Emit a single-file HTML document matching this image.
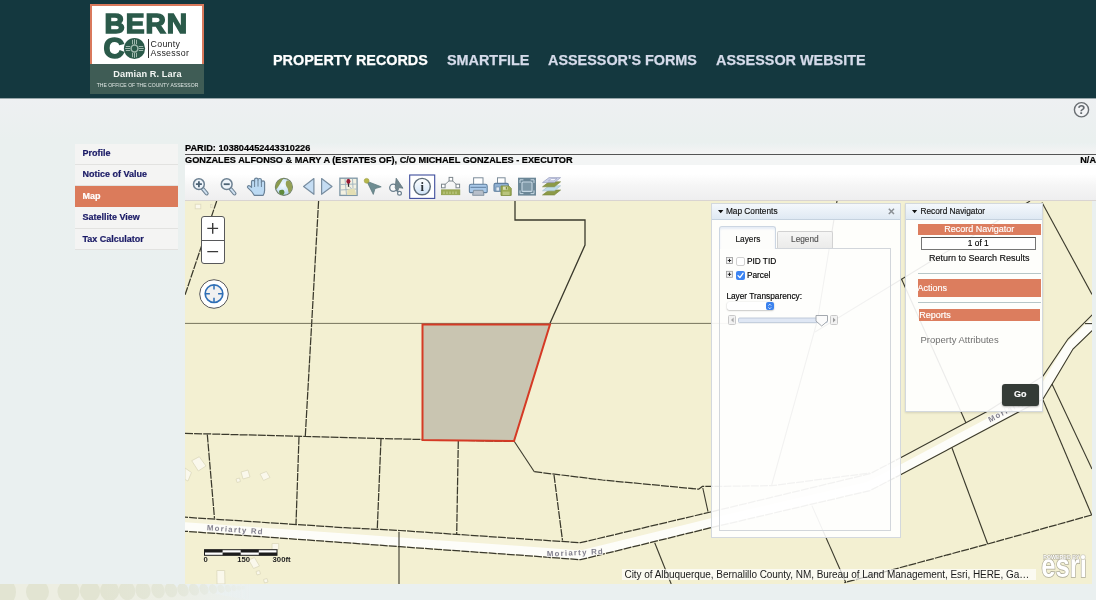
<!DOCTYPE html>
<html lang="en">
<head>
<meta charset="utf-8">
<title>Bernalillo County Assessor - Map</title>
<style>
*{box-sizing:border-box;margin:0;padding:0}
html,body{width:1096px;height:600px;overflow:hidden}
body{position:relative;background:linear-gradient(#eef0f2 98px,#eaf0ef 140px,#eaf0f0 400px);font-family:"Liberation Sans",sans-serif;color:#000}
.abs{position:absolute}
#header{position:absolute;left:0;top:0;width:1096px;height:98px;background:#14383f}
#logo{position:absolute;left:90px;top:4px;width:115px;height:90px}
#nav a{position:absolute;top:50.7px;-webkit-text-stroke:.25px;font-size:14.4px;line-height:18px;font-weight:bold;color:#d5dbea;white-space:nowrap;text-decoration:none;letter-spacing:0}
#nav a.cur{color:#fff}
#side{position:absolute;left:75px;top:144px;width:103px;background:#f4f4f3}
#side div{height:21px;padding:0 0 0 7.5px;font-size:9px;line-height:20px;-webkit-text-stroke:.2px;font-weight:bold;color:#1a1a66;border-bottom:1px solid #e2e2e0;margin:0}
#side div:nth-child(1){line-height:18px}#side div:nth-child(2){line-height:19.2px}#side div:nth-child(3){line-height:20.6px}#side div:nth-child(4){height:22px}
#side div.sel{background:#db7b5b;color:#fff;border-bottom-color:#db7b5b}
#titles{-webkit-text-stroke:.2px;position:absolute;left:185px;top:143px;width:911px;background:linear-gradient(#eaf0f0,#f2f3f3 8px,#f4f5f5 11px,#f3f5f5);font-size:9.18px;font-weight:bold;line-height:11px}
#toolbar{position:absolute;left:185px;top:165px;width:911px;height:36px;background:linear-gradient(#fff,#fff 9px,#f6f6f6 20px,#eeeeef 35px);border-bottom:1px solid #d9d4d2}
#map{position:absolute;left:185px;top:201px;width:907px;height:383px;background:#f3f0d2;overflow:hidden}
.panel{-webkit-text-stroke:.15px;position:absolute;background:rgba(255,255,255,.9);border:1px solid #d3d8dd;font-size:8.3px}
.ptitle{position:absolute;left:0;top:0;right:0;height:16px;background:linear-gradient(#f4f8fc,#dfe9f3);border-bottom:1px solid #c5d2df;font-size:8.3px;line-height:15px;padding-left:14.5px;color:#111}
.obar{position:absolute;background:#dc7d5e;color:#fff;font-size:10px}
</style>
</head>
<body>
<div id="root" style="position:absolute;left:0;top:0;width:1096px;height:600px;will-change:transform">
<div id="header">
  <div id="logo">
    <div class="abs" style="left:0;top:-.4px;width:114.4px;height:61.4px;background:#fff;border:2px solid #d9795c;border-bottom:none"></div>
    <div class="abs" style="left:0;top:60px;width:114.4px;height:30px;background:#3f5c55"></div>
    <div class="abs" style="left:14.5px;top:5.3px;font-size:28.2px;line-height:28px;font-weight:bold;color:#2b5a4a;letter-spacing:.9px;-webkit-text-stroke:1.5px #2b5a4a">BERN</div>
    <div class="abs" style="left:13.5px;top:30px;font-size:29px;line-height:28px;font-weight:bold;color:#2b5a4a;-webkit-text-stroke:1.5px #2b5a4a">C</div>
    <svg class="abs" style="left:33px;top:33px" width="23" height="23" viewBox="0 0 23 23"><circle cx="11.5" cy="11.5" r="10.6" fill="#2b5a4a"/><g stroke="#9fb8ad" stroke-width="1" fill="none"><path d="M9.5 2.8v4.4M11.5 2.2v5M13.500 2.800v4.400M9.5 15.800v4.400M11.5 15.800v5M13.500 15.800v4.400M2.800 9.500h4.400M2.200 11.500h5M2.800 13.500h4.400M15.800 9.500h4.400M15.800 11.500h5M15.800 13.500h4.400"/><circle cx="11.500" cy="11.500" r="3.400" stroke-width="1.500"/></g></svg>
    <div class="abs" style="left:57.5px;top:34.5px;width:1px;height:19.5px;background:#333"></div>
    <div class="abs" style="left:60.5px;top:35.5px;font-size:8.8px;line-height:9.7px;color:#222;letter-spacing:.32px">County<br>Assessor</div>
    <div class="abs" style="left:0;top:65px;width:115px;text-align:center;font-size:9.2px;line-height:11px;font-weight:bold;color:#f2f5f3;letter-spacing:.1px">Damian R. Lara</div>
    <div class="abs" style="left:-20.5px;top:77.5px;width:155px;text-align:center;font-size:5.9px;line-height:7px;color:#dfe6e3;white-space:nowrap;transform:scaleX(.86)">THE OFFICE OF THE COUNTY ASSESSOR</div>
  </div>
  <div id="nav">
    <a class="cur" style="left:273px">PROPERTY RECORDS</a>
    <a style="left:447px">SMARTFILE</a>
    <a style="left:548px">ASSESSOR'S FORMS</a>
    <a style="left:716px">ASSESSOR WEBSITE</a>
  </div>
</div>

<div class="abs" style="left:0;top:98px;width:1096px;height:1px;background:rgba(20,56,63,.4)"></div>
<div id="side">
  <div>Profile</div>
  <div>Notice of Value</div>
  <div class="sel">Map</div>
  <div>Satellite View</div>
  <div>Tax Calculator</div>
</div>

<div id="titles">
  <div style="height:11px">PARID: 103804452443310226</div>
  <div style="border-top:1px solid #555;height:11px;position:relative"><b id="own">GONZALES ALFONSO &amp; MARY A (ESTATES OF), C/O MICHAEL GONZALES - EXECUTOR</b><span style="position:absolute;right:0;top:0">N/A</span></div>
</div>

<div id="toolbar"><svg class="abs" style="left:0;top:0" width="911" height="36" viewBox="185 165 911 36">
<defs>
<linearGradient id="gl" x1="0" y1="0" x2="0" y2="1"><stop offset="0" stop-color="#ffffff"/><stop offset="1" stop-color="#cfe3f6"/></linearGradient>
<radialGradient id="gg" cx=".45" cy=".4" r=".65"><stop offset="0" stop-color="#f4f9fd"/><stop offset=".6" stop-color="#cfe6f7"/><stop offset="1" stop-color="#a9cbe8"/></radialGradient>
</defs>
<!-- zoom in -->
<g transform="translate(198.900 184.200)"><path d="M4 4.800L7.800 9.300" stroke="#6d8192" stroke-width="4" stroke-linecap="round"/><path d="M4.200 5L7.700 9.200" stroke="#cfe0f0" stroke-width="1.900" stroke-linecap="round"/><circle cx="0" cy="0" r="5.400" fill="#eef4fa" stroke="#6d8192" stroke-width="1.500"/><path d="M-3 0h6M0 -3v6" stroke="#4d6375" stroke-width="1.800"/></g>
<!-- zoom out -->
<g transform="translate(226.700 184.200)"><path d="M4 4.800L7.800 9.300" stroke="#6d8192" stroke-width="4" stroke-linecap="round"/><path d="M4.200 5L7.700 9.200" stroke="#cfe0f0" stroke-width="1.900" stroke-linecap="round"/><circle cx="0" cy="0" r="5.400" fill="#eef4fa" stroke="#6d8192" stroke-width="1.500"/><path d="M-3 0h6" stroke="#4d6375" stroke-width="1.800"/></g>
<!-- hand -->
<path d="M254.200 195.300c-1.200-2.600-3.600-5.200-6.300-7.400-1.200-1.300.3-3 1.900-2l1.700 1.500v-5.600c0-2 3.100-2 3.100 0v-2.200c0-2.100 3.400-2.100 3.400 0v.4c0-2 3.400-2 3.400 0v2.200c0-1.900 3.200-1.900 3.200 0v8c0 2-.5 3.600-1.400 5.100z" fill="#bcdaf3" stroke="#6a8196" stroke-width="1.200" stroke-linejoin="round"/>
<path d="M254.600 181.800v5.200M258 180v6.600M261.400 182v5" stroke="#6a8196" stroke-width="1" fill="none"/>
<!-- globe -->
<clipPath id="gclip"><circle cx="283.900" cy="186.900" r="8.300"/></clipPath>
<circle cx="283.900" cy="186.900" r="8.500" fill="url(#gg)" stroke="#71806a" stroke-width="1.200"/>
<g clip-path="url(#gclip)">
<path d="M274 184c.5-3 3-5.500 6-6.500 1.500-.3 3.500-.2 4.300.5-.5 1-1.800 1.300-2.300 2.500-.3 1.200-1.200 2-1.700 3-.6 1.200-1.500 2.300-2.200 3.400-.7 1-1.400 2.300-2.600 2.200-1-.7-1.700-3-1.500-5.100z" fill="#8a9a4e"/>
<path d="M279.600 190.300c1.200-.8 2.800-.9 3.900-.2 1 .9 1.200 2.200.6 3.400-.6 1.100-1.300 2.300-2.400 2.800-1.200-.6-1.800-1.800-2.300-3-.4-1-.6-2.200.2-3z" fill="#5f8a3c"/>
<path d="M287 180.500c1.500-.3 3.200.5 4.300 1.700 1.500 1.700 2.200 4 2 6.200-.3 2-1.200 4-2.800 5.200-1 .4-1.700-.5-2-1.400-.5-1.500-.3-3.200-1.200-4.500-.8-1.300-1.700-2.700-1.500-4.200.1-1.200.4-2.400 1.200-3z" fill="#93a055"/>
</g>
<!-- nav arrows -->
<path d="M303.600 186.400L313.900 178.600V194.300z" fill="#c5ddf3" stroke="#788da0" stroke-width="1.200" stroke-linejoin="round"/>
<path d="M332 186.400L321.600 178.600V194.300z" fill="#c5ddf3" stroke="#788da0" stroke-width="1.200" stroke-linejoin="round"/>
<!-- map pin -->
<rect x="339.900" y="178.200" width="17.200" height="17.200" fill="#f3f1e2" stroke="#7d96a6" stroke-width="1.300"/>
<path d="M340.500 190l16 -1M345 178.800l1.500 16M340.500 184.500l16-.5M352.500 178.800l.5 9.500M349.500 186.500l6.800 8.500" stroke="#9fb3be" stroke-width=".9" fill="none"/>
<path d="M347.500 189.500l7 -1 2 6.500h-9.500z" fill="#e4dfb4"/>
<path d="M348.500 186.800v-4" stroke="#333" stroke-width="1.200"/>
<ellipse cx="348.400" cy="181.300" rx="2" ry="2.500" fill="#981a33"/>
<!-- select arrow -->
<path d="M366.800 181.200L381.200 186.800 375 188.600 373.300 194.400z" fill="#6f8d92" stroke="#5f7c82" stroke-width=".8" stroke-linejoin="round"/>
<circle cx="366.600" cy="180.800" r="2.400" fill="#b6b84a" stroke="#9a9c3c" stroke-width=".6"/>
<!-- pointer with circle -->
<circle cx="393.300" cy="187.700" r="3.600" fill="#fff" fill-opacity=".6" stroke="#6b7f8d" stroke-width="1.300"/>
<path d="M396.200 178.200L403 188.200 399 187.600 397.400 191.800 395.200 187.800z" fill="#72888f" stroke="#5f747c" stroke-width=".8" stroke-linejoin="round"/>
<circle cx="399.500" cy="193.300" r="1.900" fill="#fff" stroke="#6b7f8d" stroke-width="1.200"/>
<path d="M396 189.800l2.300 2.300" stroke="#6b7f8d" stroke-width="1.200"/>
<!-- info -->
<rect x="409.700" y="175" width="25" height="23.400" fill="#fff" stroke="#3d4c9c" stroke-width="1.100"/>
<circle cx="422.100" cy="186.600" r="8.200" fill="url(#gl)" stroke="#5c6b78" stroke-width="1.400"/>
<text x="422.200" y="191.400" font-family="'Liberation Serif',serif" font-weight="bold" font-size="12.500" fill="#2a3036" text-anchor="middle">i</text>
<!-- measure -->
<path d="M443.400 186l7.500-6.800 7 6.800" fill="none" stroke="#8a9297" stroke-width="1"/>
<g fill="#fff" stroke="#7d868c" stroke-width="1"><rect x="449.100" y="177.400" width="3.600" height="3.600"/><rect x="441.500" y="184.200" width="3.600" height="3.600"/><rect x="456" y="184.200" width="3.600" height="3.600"/></g>
<rect x="441.300" y="189.800" width="18.600" height="5" fill="#9cab52" stroke="#8b9a45" stroke-width=".6"/>
<path d="M444 191.500v2.500M447 191.500v2.500M450 191.500v2.500M453 191.500v2.500M456 191.500v2.500" stroke="#cdd69a" stroke-width=".9"/>
<!-- printer -->
<g>
<rect x="473.600" y="177.800" width="9.400" height="7" fill="#fff" stroke="#7c8c9a" stroke-width="1"/>
<path d="M471.200 184.200h14.200c1 0 1.800.8 1.800 1.800v5.600c0 .6-.5 1-1 1h-15.800c-.6 0-1-.4-1-1v-5.600c0-1 .8-1.800 1.800-1.800z" fill="#a9c9e9" stroke="#5f7f9f" stroke-width="1.100"/>
<path d="M470.500 187.300h15.600" stroke="#5f7f9f" stroke-width="1"/>
<path d="M472.600 195.300l1-5h9.400l1 5z" fill="#b7bfca" stroke="#7c8c9a" stroke-width=".9"/>
</g>
<!-- printer + save -->
<g>
<rect x="497.500" y="177.800" width="7.600" height="6" fill="#fff" stroke="#7c8c9a" stroke-width="1"/>
<path d="M495.600 183.400h11.200c.9 0 1.600.7 1.600 1.600v5.400c0 .5-.4.900-.9.900h-12.600c-.5 0-.9-.4-.9-.9v-5.400c0-.9.700-1.600 1.600-1.600z" fill="#8fb0d2" stroke="#5f7f9f" stroke-width="1.100"/>
<rect x="496" y="187" width="3.500" height="4" fill="#dfe8f2" stroke="#5f7f9f" stroke-width=".6"/>
<path d="M501 186h7.800l2.400 2.400v7h-10.200z" fill="#9cab52" stroke="#7f8d3f" stroke-width=".9"/>
<rect x="503" y="186.600" width="4.600" height="3.200" fill="#d7ddb5"/><rect x="505.800" y="187" width="1.200" height="2.400" fill="#7f8d3f"/>
<rect x="502.600" y="191.600" width="7" height="3.400" fill="#b9c47c"/>
</g>
<!-- extent -->
<rect x="518" y="177.700" width="18" height="17.900" fill="#6c8797"/>
<rect x="522" y="182" width="10" height="9.400" rx="1" fill="#7f99a8" stroke="#c6d8e3" stroke-width="1.100"/>
<path d="M520 183v-3.200h3.400M530.600 179.800h3.400v3.200M534 190.400v3.200h-3.400M523.400 193.600h-3.400v-3.200" fill="none" stroke="#c6d8e3" stroke-width="1"/>
<!-- layers -->
<g stroke-width=".6">
<path d="M542.500 193l6.500-5h11.600l-6.200 5z" transform="translate(0 2)" fill="#8c9a47" stroke="#76833a"/>
<path d="M542.500 193l6.500-5h11.600l-6.200 5z" transform="translate(0 -2.200)" fill="#bfdcea" stroke="#9dbccb"/>
<path d="M542.500 193l6.500-5h11.600l-6.200 5z" transform="translate(0 -6.200)" fill="#8c9a47" stroke="#76833a"/>
<path d="M542.500 193l6.500-5h11.600l-6.200 5z" transform="translate(0 -10.400)" fill="#c9cfe9" stroke="#8d93b6"/>
<path d="M548.500 180.800l3-2.300h5.400l-2.900 2.300z" fill="#f3f4fb" stroke="#8d93b6" stroke-width=".5"/>
</g>
</svg></div>

<!-- help icon -->
<svg class="abs" style="left:1073px;top:101px" width="18" height="18" viewBox="0 0 18 18"><circle cx="8.500" cy="8.750" r="7.100" fill="#f3f4f6" stroke="#6a6f73" stroke-width="1.400"/><text x="8.600" y="13.400" font-family="'Liberation Sans',sans-serif" font-size="13" font-weight="bold" fill="#63696e" text-anchor="middle">?</text></svg>
<!-- bottom decoration -->
<svg class="abs" style="left:0;top:584px" width="1096" height="16" viewBox="0 0 1096 16">
<defs><linearGradient id="fade" x1="0" x2="1" y1="0" y2="0"><stop offset="0" stop-color="#eaf0f0" stop-opacity="0"/><stop offset=".5" stop-color="#eaf0f0" stop-opacity=".25"/><stop offset="1" stop-color="#eaf0f0" stop-opacity=".95"/></linearGradient></defs>
<polygon points="0,0 160,0 250,16 0,16" fill="#edeee2"/>
<g fill="#e2e4d2"><ellipse cx="7" cy="8.0" rx="9" ry="12.5" transform="rotate(-0 7 8.0)"/><ellipse cx="37.5" cy="7.8" rx="11.5" ry="11.9" transform="rotate(-2 37.5 7.8)"/><ellipse cx="68.5" cy="7.5" rx="11" ry="11.3" transform="rotate(-5 68.5 7.5)"/><ellipse cx="90" cy="7.2" rx="10" ry="10.6" transform="rotate(-8 90 7.2)"/><ellipse cx="109.6" cy="7.0" rx="9.5" ry="10.0" transform="rotate(-10 109.6 7.0)"/><ellipse cx="127" cy="6.8" rx="8.2" ry="9.4" transform="rotate(-12 127 6.8)"/><ellipse cx="143" cy="6.5" rx="7.4" ry="8.8" transform="rotate(-15 143 6.5)"/><ellipse cx="158" cy="6.2" rx="6.5" ry="8.2" transform="rotate(-18 158 6.2)"/><ellipse cx="171" cy="6.0" rx="6" ry="7.5" transform="rotate(-20 171 6.0)"/><ellipse cx="183" cy="5.8" rx="5.4" ry="6.9" transform="rotate(-22 183 5.8)"/><ellipse cx="194" cy="5.5" rx="4.9" ry="6.3" transform="rotate(-25 194 5.5)"/><ellipse cx="204" cy="5.2" rx="4.4" ry="5.7" transform="rotate(-25 204 5.2)"/><ellipse cx="213" cy="5.0" rx="3.9" ry="5.1" transform="rotate(-25 213 5.0)"/><ellipse cx="221" cy="4.8" rx="3.4" ry="4.4" transform="rotate(-25 221 4.8)"/><ellipse cx="228" cy="4.5" rx="3" ry="3.8" transform="rotate(-25 228 4.5)"/><ellipse cx="234" cy="4.2" rx="2.6" ry="3.2" transform="rotate(-25 234 4.2)"/><ellipse cx="239" cy="4.0" rx="2.2" ry="2.6" transform="rotate(-25 239 4.0)"/><ellipse cx="243" cy="3.8" rx="1.9" ry="2.0" transform="rotate(-25 243 3.8)"/></g>
<rect x="100" y="0" width="150" height="16" fill="url(#fade)"/>
</svg>


<div id="map">
<svg class="abs" style="left:0;top:0" width="907" height="383" viewBox="185 201 907 383">
<rect x="185" y="201" width="907" height="383" fill="#f3f0d2"/>
<!-- buildings -->
<g fill="#faf8ec" stroke="#dfdbc0" stroke-width=".9">
<polygon points="191.7,460.7 199.3,456.7 206,466 198.3,471"/>
<polygon points="185,468 191.5,472.5 188,481 185,479.5"/>
<polygon points="241,472 248,470 250,477 243,479"/>
<polygon points="260,474 266.5,471.5 270,477.5 263.5,480.5"/>
<polygon points="236,479 239.5,478 240.5,481.5 237,482.5"/>
<polygon points="272,543.5 278.7,543.5 278.7,549.5 272,549.5"/>
<polygon points="248.7,560 254.5,557.5 259.5,566 253.5,568.5"/>
<polygon points="216.8,570.5 224.7,570.5 225,584 217,584"/>
<polygon points="256,571.5 259.5,570.5 260.5,574 257,575"/>
<polygon points="263.5,579.5 267,578.5 268,582 264.5,583"/>
<rect x="195.200" y="204.200" width="5.600" height="4.600"/>
<rect x="210.500" y="204.500" width="1.500" height="3"/>
</g>
<!-- road -->
<polygon points="180.0,516.9 345.0,527.7 400.0,530.5 520.0,538.7 580.5,542.7 710.6,512.0 870.0,473.7 902.0,457.0 988.0,411.0 1043.0,376.0 1068.0,339.0 1096.0,311.0 1096.0,327.0 1073.0,349.0 1054.0,381.0 1043.0,399.0 902.0,474.0 870.0,490.6 711.0,527.7 580.5,559.7 520.0,555.2 400.0,546.7 345.0,542.7 180.0,530.9" fill="#f5f2d9"/>
<polyline points="180.3,526.0 345.4,537.8 400.4,541.8 520.4,550.3 580.1,554.8 709.9,522.9 868.3,486.0 899.7,469.7 1039.6,395.4 1049.8,378.5 1069.2,346.0 1092.6,323.5" fill="none" stroke="#fdfdf9" stroke-width="8.4" stroke-linejoin="round"/>
<!-- parcel lines -->
<g fill="none" stroke="#3a392c" stroke-width="1.25" stroke-dasharray="8 1.1">
<line x1="216.7" y1="201" x2="185" y2="295"/>
<line x1="318.6" y1="201" x2="305.3" y2="436"/>
<polyline points="185,433.3 305,436.5 422,439.5 514,441.5"/>
<line x1="207.3" y1="434.5" x2="214.5" y2="518.5"/>
<line x1="299" y1="436.7" x2="296" y2="524"/>
<line x1="381" y1="438.5" x2="377.3" y2="528.5"/>
<line x1="458.3" y1="441" x2="456.7" y2="534"/>
<polyline points="180.0,516.9 345.0,527.7 400.0,530.5 520.0,538.7 580.5,542.7 710.6,512.0 870.0,473.7 902.0,457.0"/>
<polyline points="180.0,530.9 345.0,542.7 400.0,546.7 520.0,555.2 580.5,559.7 711.0,527.7 870.0,490.6 902.0,474.0"/>
<polyline points="534.3,471.7 602.5,480 698.7,489.2 702.4,486.4 711,486.4 772,485.7 870,473"/>
<line x1="554" y1="475" x2="562.5" y2="540.5"/>
<polyline points="1091.7,515 987.7,544 844.3,582.7"/>
</g>
<g fill="none" stroke="#3a392c" stroke-width="1.1">
<line x1="185" y1="323.4" x2="817" y2="323.4" stroke-width=".8" stroke="#55543f"/>
<polyline points="902.0,457.0 988.0,411.0 1043.0,376.0 1068.0,339.0 1096.0,311.0"/>
<polyline points="902.0,474.0 1043.0,399.0 1054.0,381.0 1073.0,349.0 1096.0,327.0"/>
<polyline points="515,201 515,220 585,220 585,245 550,323.3" stroke-width="1.3"/>
<line x1="514" y1="441" x2="534.3" y2="471.7"/>
<line x1="399" y1="531.7" x2="399" y2="584"/>
<line x1="702.8" y1="488" x2="708" y2="511.7"/>
<line x1="654.7" y1="542.7" x2="671.2" y2="584"/>
<line x1="811.9" y1="505.6" x2="846" y2="583"/>
<line x1="817.5" y1="320" x2="771.7" y2="485"/>
<line x1="837" y1="201" x2="817.5" y2="320"/>
<line x1="1030" y1="201" x2="815" y2="332"/>
<line x1="901.5" y1="279" x2="966" y2="423"/>
<line x1="952" y1="448" x2="987.7" y2="544"/>
<line x1="1043" y1="400" x2="1091.7" y2="515"/>
<line x1="1052" y1="384" x2="1092" y2="469"/>
<line x1="1042" y1="202.5" x2="1092" y2="294.4"/>
<line x1="1085" y1="323.6" x2="1092" y2="323.6"/>
</g>
<!-- selected parcel -->
<polygon points="422.5,324.5 550,324.5 514,441 422.5,440" fill="#c9c5b1" stroke="#d53a25" stroke-width="2" stroke-linejoin="miter"/>
<!-- road labels -->
<g font-family="'Liberation Sans',sans-serif" font-size="7.8" font-weight="bold" fill="#83818f" stroke="#fbfaf4" stroke-width="1.4" paint-order="stroke" letter-spacing="1.25">
<text x="206.7" y="530.2" transform="rotate(4.2 206.7 530.2)">Moriarty  Rd</text>
<text x="547" y="556.5" transform="rotate(-2.5 547 556.5)">Moriarty  Rd</text>
<text x="990" y="422.5" transform="rotate(-28 990 422.5)">Moriarty Rd</text>
</g>
<!-- scalebar -->
<g>
<rect x="204.5" y="549.7" width="72.5" height="5.6" fill="#fff" stroke="#1c1c1c" stroke-width="1"/>
<rect x="204.5" y="549.7" width="18.1" height="2.8" fill="#1c1c1c"/>
<rect x="222.6" y="552.5" width="18.1" height="2.8" fill="#1c1c1c"/>
<rect x="240.7" y="549.7" width="18.1" height="2.8" fill="#1c1c1c"/>
<rect x="258.8" y="552.5" width="18.2" height="2.8" fill="#1c1c1c"/>
<g font-family="'Liberation Sans',sans-serif" font-size="7.7" font-weight="bold" fill="#222" stroke="#f3f0d2" stroke-width="1" paint-order="stroke">
<text x="203.6" y="562.3">0</text><text x="237.2" y="562.3">150</text><text x="272.6" y="562.3">300ft</text>
</g>
</g>
</svg>

<!-- zoom controls -->
<div class="abs" style="left:15.5px;top:15.4px;width:24.5px;height:48px;background:#fff;border:1px solid #57585a;border-radius:3px"></div>
<div class="abs" style="left:15.5px;top:38.8px;width:24.5px;height:1px;background:#57585a"></div>
<svg class="abs" style="left:16px;top:15.6px" width="24" height="48" viewBox="0 0 24 48"><path d="M6.300 11.400h10.800M11.700 6v10.800M6.300 34.600h10.800" stroke="#3a3a3a" stroke-width="1.400" fill="none"/></svg>
<svg class="abs" style="left:13px;top:77px" width="32" height="32" viewBox="0 0 32 32"><circle cx="16" cy="16" r="14.3" fill="#fff" stroke="#57585a" stroke-width="1"/><circle cx="16" cy="15.700" r="8.800" fill="#f1f1f1" stroke="#2f6fb6" stroke-width="1.700"/><path d="M16 7v4.600M16 19.800v4.600M7.300 15.700h4.600M20.100 15.700h4.600" stroke="#2f6fb6" stroke-width="1.500"/></svg>

<!-- Map Contents panel -->
<div class="panel" id="pmc" style="left:526.2px;top:2.3px;width:190.2px;height:335px">
  <div class="ptitle" style="padding-left:13.700px">Map Contents</div>
  <svg class="abs" style="left:5.4px;top:5.800px" width="7" height="4" viewBox="0 0 7 4"><path d="M0 0h5.400L2.700 3.200z" fill="#111"/></svg>
  <svg class="abs" style="left:176.2px;top:4px" width="7" height="7" viewBox="0 0 7 7"><path d="M.8.8l5.2 5.2M6 .8L.8 6" stroke="#8a8f94" stroke-width="1.5" fill="none"/></svg>
  <div class="abs" style="left:7.2px;top:44px;width:172px;height:283px;border:1px solid #d2d6db;background:rgba(255,255,255,.35)"></div>
  <div class="abs tab" style="left:7.2px;top:22px;width:57px;height:23px;background:#fdfdfb;border:1px solid #ccd6e2;border-bottom:none;border-radius:3px 3px 0 0;text-align:center;line-height:24px;color:#111;box-shadow:inset 0 2px 2px #e6edf6">Layers</div>
  <div class="abs tab" style="left:64.7px;top:27px;width:56px;height:17px;background:linear-gradient(#f6f6f5,#ebebea);border:1px solid #d2d2d2;border-bottom:none;border-radius:2px 2px 0 0;text-align:center;line-height:15px;color:#555">Legend</div>
  <svg class="abs" style="left:14.2px;top:53px" width="8" height="22" viewBox="0 0 8 22"><g fill="#f1f1f1" stroke="#9a9a9a" stroke-width=".8"><rect x=".5" y=".5" width="6" height="6"/><rect x=".5" y="14.3" width="6" height="6"/></g><path d="M1.8 3.5h3.4M3.5 1.8v3.4M1.8 17.3h3.4M3.5 15.6v3.4" stroke="#222" stroke-width="1"/></svg>
  <div class="abs" style="left:23.7px;top:52.5px;width:9px;height:9px;border:1px solid #d0d0d0;border-radius:2px;background:#fff"></div>
  <div class="abs" style="left:23.7px;top:66.5px;width:9px;height:9px;border-radius:2px;background:#3c84f2"></div>
  <svg class="abs" style="left:23.7px;top:66.5px" width="9" height="9" viewBox="0 0 9 9"><path d="M2 4.6l1.9 2L7 2.3" stroke="#fff" stroke-width="1.3" fill="none" stroke-linecap="round" stroke-linejoin="round"/></svg>
  <div class="abs" style="left:34.7px;top:52px;line-height:10px;font-size:8.3px">PID TID</div>
  <div class="abs" style="left:34.7px;top:66px;line-height:10px;font-size:8.3px">Parcel</div>
  <div class="abs" style="left:14.2px;top:86.5px;line-height:10px;font-size:8.3px">Layer Transparency:</div>
  <div class="abs" style="left:14.7px;top:97.5px;width:47px;height:8.5px;background:#fff;border-radius:2px;box-shadow:0 .5px 1.5px rgba(0,0,0,.35)"></div>
  <div class="abs" style="left:54.2px;top:97.5px;width:7.5px;height:8.5px;background:#3b82ee;border-radius:2px"></div>
  <svg class="abs" style="left:54.2px;top:97.5px" width="8" height="9" viewBox="0 0 8 9"><path d="M2.4 3.6L3.8 2.2 5.2 3.6M2.4 5.4L3.8 6.8 5.2 5.4" stroke="#fff" stroke-width=".8" fill="none"/></svg>
  <div class="abs" style="left:15.7px;top:110.5px;width:8.5px;height:10px;background:#f2f2f2;border:1px solid #c9c9c9;border-radius:1.5px"></div>
  <div class="abs" style="left:117.7px;top:110.5px;width:8.5px;height:10px;background:#f2f2f2;border:1px solid #c9c9c9;border-radius:1.5px"></div>
  <svg class="abs" style="left:15.7px;top:110.5px" width="111" height="12" viewBox="0 0 111 12"><path d="M5.6 2.6L3 5l2.6 2.4z" fill="#aaa"/><path d="M105 2.6l2.6 2.4-2.6 2.4z" fill="#999"/><rect x="10.5" y="3" width="89" height="4.6" rx="1" fill="#dfe7f4" stroke="#b4c0d2" stroke-width=".8"/><path d="M88 .5h11.5v5.6L93.7 11 88 6.1z" fill="#fbfbfb" stroke="#9a9fa6" stroke-width=".9"/></svg>
</div>

<!-- Record Navigator panel -->
<div class="panel" id="prn" style="left:720px;top:2px;width:137.5px;height:208.5px;box-shadow:0 1px 2px rgba(0,0,0,.12)">
  <div class="ptitle">Record Navigator</div>
  <svg class="abs" style="left:5.600px;top:5.900px" width="7" height="4" viewBox="0 0 7 4"><path d="M0 0h5.200L2.600 3.200z" fill="#111"/></svg>
  <div class="obar" style="left:12px;top:20px;width:122.5px;height:10.5px;line-height:10.5px;text-align:center;font-size:9px">Record Navigator</div>
  <div class="abs" style="left:15px;top:33px;width:114.5px;height:12.5px;border:1px solid #767676;border-top-color:#555;background:#fff;text-align:center;font-size:8.3px;line-height:11px">1 of 1</div>
  <div class="abs" style="left:12px;top:48.5px;width:122.5px;text-align:center;font-size:9px;line-height:11px;color:#111">Return to Search Results</div>
  <div class="abs" style="left:11.5px;top:68.5px;width:123.5px;height:1.3px;background:#b7c6c7"></div>
  <div class="obar" style="left:11.5px;top:74.5px;width:123.5px;height:18.7px;line-height:18.7px;font-size:9px">Actions</div>
  <div class="abs" style="left:11.5px;top:98px;width:123.5px;height:1.3px;background:#b7c6c7"></div>
  <div class="obar" style="left:12.5px;top:105px;width:121.5px;height:12px;line-height:12px;font-size:9px;padding-left:.8px">Reports</div>
  <div class="abs" style="left:14.5px;top:129.5px;font-size:9.5px;line-height:12px;color:#707070;-webkit-text-stroke:0">Property Attributes</div>
  <div class="abs" style="left:95.700px;top:180.300px;width:37px;height:21.500px;background:#343b36;border-radius:3px;color:#fff;font-weight:bold;font-size:9px;line-height:21.5px;text-align:center;box-shadow:0 1px 2px rgba(0,0,0,.3)">Go</div>
</div>

<!-- attribution -->
<div class="abs" style="left:437px;top:368px;width:413.5px;height:11.2px;background:rgba(255,255,255,.68);font-size:10px;letter-spacing:-.05px;line-height:11.3px;color:#1a1a1a;white-space:nowrap;padding-left:2.5px">City of Albuquerque, Bernalillo County, NM, Bureau of Land Management, Esri, HERE, Ga…</div>
<!-- esri logo -->
<svg class="abs" style="left:854px;top:350px" width="52" height="32" viewBox="0 0 52 32">
<g font-family="'Liberation Sans',sans-serif" font-weight="bold" fill="#fff" stroke="#a5a392" stroke-opacity=".9" paint-order="stroke">
<text x="4.300" y="7.900" font-size="5.700" textLength="36.300" lengthAdjust="spacingAndGlyphs" stroke-width="1">POWERED BY</text>
<clipPath id="eclip"><rect x="0" y="8.200" width="52" height="24"/></clipPath><text x="2.200" y="26" font-size="33" textLength="45.800" lengthAdjust="spacingAndGlyphs" stroke-width="1.600" clip-path="url(#eclip)">esri</text>
</g>
<circle cx="44" cy="6.100" r="2.500" fill="#fff" stroke="#a9a795" stroke-opacity=".75" stroke-width=".6"/>
</svg>
</div>

</div>
</body>
</html>
